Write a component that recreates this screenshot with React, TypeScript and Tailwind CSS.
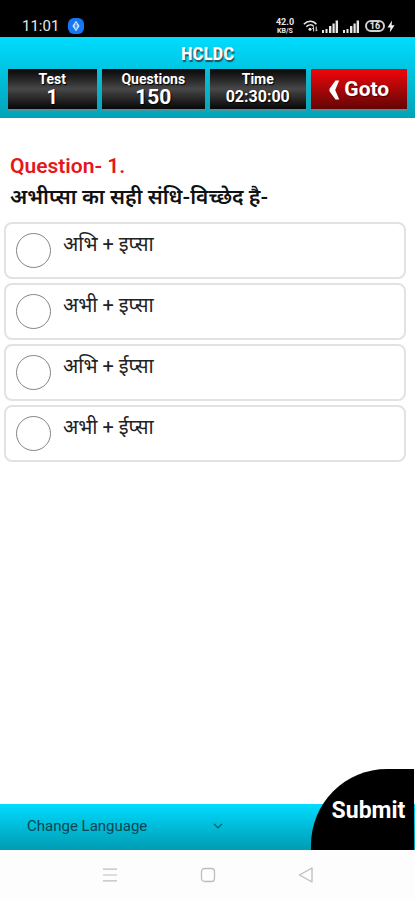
import React, { useState } from 'react';

const options = ['अभि + इप्सा', 'अभी + इप्सा', 'अभि + ईप्सा', 'अभी + ईप्सा'];

const Signal: React.FC = () => (
  <svg viewBox="0 0 16 13" className="w-4 h-[13px]" fill="#e8e8e8" aria-hidden="true">
    <rect x="0" y="10" width="2" height="3" />
    <rect x="3.5" y="9" width="2" height="4" />
    <rect x="7" y="6" width="2.4" height="7" />
    <rect x="10.5" y="3.5" width="2.2" height="9.5" />
    <rect x="13.6" y="0.5" width="2.4" height="12.5" />
  </svg>
);

const StatusBar: React.FC = () => (
  <div className="h-[37px] bg-black text-[#e8e8e8] flex items-end justify-between pl-[22px] pr-5 pb-px">
    <div className="flex items-center gap-[9px]">
      <span className="text-[15px] leading-5">11:01</span>
      <svg viewBox="0 0 16 16" className="w-4 h-4" aria-hidden="true">
        <rect width="16" height="16" rx="6" fill="#1677f2" />
        <path d="M8 2.8 11.6 8 8 13.2 4.4 8Z" fill="#cfe4ff" />
        <path d="M8 5v6M6.5 8h3" stroke="#1677f2" strokeWidth="1" />
      </svg>
    </div>
    <div className="flex items-center h-5">
      <div className="w-5 flex flex-col items-center font-bold mr-2">
        <span className="text-[9px] leading-[10px]">42.0</span>
        <span className="text-[7px] leading-2">KB/S</span>
      </div>
      <svg viewBox="0 0 15 12" className="w-[15px] h-3 mr-1" fill="none" stroke="#e8e8e8" aria-hidden="true">
        <path d="M0.8 4.2C4.6 0.2 10 0.2 13.4 4.2" strokeWidth="1.5" />
        <path d="M3.3 6.8C5.6 4.3 8.8 4.3 10.8 6.4" strokeWidth="1.5" />
        <circle cx="7" cy="9.3" r="1.5" fill="#e8e8e8" stroke="none" />
        <path d="M10.6 11.5V7.5M9.4 8.8l1.2-1.5M13.2 6.5v4.5M14.3 9.8l-1.1 1.4" strokeWidth="1" />
      </svg>
      <Signal />
      <span className="w-[5px]" />
      <Signal />
      <div className="ml-[6px] w-5 h-3 rounded-[6px] border-2 border-[#d0d0d0] text-[9px] leading-2 text-center font-bold">
        16
      </div>
      <svg viewBox="0 0 8 13" className="w-2 h-[13px] ml-[2px]" fill="#f0f0f0" aria-hidden="true">
        <path d="M5 0.5 0.5 7.5H3.4L2.8 12.5 7.6 5.2H4.6Z" />
      </svg>
    </div>
  </div>
);

const InfoTile: React.FC<{ label: string; value: string; size: string }> = ({ label, value, size }) => (
  <div className="h-10 flex flex-col items-center justify-center text-white font-bold bg-linear-to-b from-[#080808] via-[#484848] to-[#080808] shadow-[0_2px_2px_#5f8d96] [text-shadow:1px_1px_1px_#000]">
    <span className="text-[14px] leading-4">{label}</span>
    <span className={`${size} leading-5`}>{value}</span>
  </div>
);

const Header: React.FC = () => (
  <header className="bg-linear-to-b from-[#00dcff] to-[#00a3b8] px-2 pb-[9px]">
    <h1 className="h-8 pt-1 text-center text-white text-[19px] leading-[26px] font-bold font-['Liberation_Sans_Narrow','Roboto_Condensed','Liberation_Sans',sans-serif] [text-shadow:1px_2px_1px_#24505a]">
      HCLDC
    </h1>
    <div className="grid grid-cols-[89fr_104fr_96fr_97fr] gap-[5px]">
      <InfoTile label="Test" value="1" size="text-[20px]" />
      <InfoTile label="Questions" value="150" size="text-[21px]" />
      <InfoTile label="Time" value="02:30:00" size="text-[16px]" />
      <button
        type="button"
        className="h-10 flex items-center justify-center gap-1 pt-[2px] text-white text-[21px] font-bold bg-linear-to-b from-[#f3040b] to-[#650505] shadow-[0_2px_2px_#5f8d96] [text-shadow:1px_1px_1px_#500]"
      >
        <svg viewBox="0 0 12 20" className="w-3 h-5" fill="#fff" aria-hidden="true">
          <path d="M7.5 0.5h3.7L7.2 10l4 9.5H7.5L1.5 11.2V8.8Z" />
        </svg>
        Goto
      </button>
    </div>
  </header>
);

const App: React.FC = () => {
  const [selected, setSelected] = useState<number | null>(null);

  return (
    <div className="min-h-screen flex flex-col bg-white font-[Roboto,'Noto_Sans_Devanagari','Noto_Sans',sans-serif]">
      <StatusBar />
      <Header />

      <main className="flex-1 pt-[34px] pl-1 pr-[9px]">
        <h2 className="pl-[6px] text-[21px] leading-7 font-semibold text-[#e5171c]">Question- 1.</h2>
        <p id="question" className="pl-[6px] h-[42px] text-[21px] leading-[34px] font-semibold text-[#111] whitespace-nowrap">
          अभीप्सा का सही संधि-विच्छेद है-
        </p>
        <div role="radiogroup" aria-labelledby="question" className="flex flex-col gap-1">
          {options.map((option, i) => (
            <label
              key={option}
              className="h-[57px] flex items-start border-2 border-[#e2e2e2] rounded-lg pl-[10px] bg-white"
            >
              <input
                type="radio"
                name="answer"
                checked={selected === i}
                onChange={() => setSelected(i)}
                className="appearance-none shrink-0 w-[35px] h-[35px] mt-[9px] rounded-full border border-[#858585] checked:border-8"
              />
              <span className="ml-3 mt-1 text-[20px] leading-8 text-[#222]">{option}</span>
            </label>
          ))}
        </div>
      </main>

      <footer className="relative h-[46px] bg-linear-to-b from-[#00dcff] to-[#009cb2] flex items-center pl-[27px] pb-[2px]">
        <div className="relative w-[200px]">
          <select
            aria-label="Change Language"
            className="appearance-none w-full bg-transparent text-[15px] leading-6 text-[#0b4652] outline-none"
          >
            <option>Change Language</option>
            <option>हिन्दी</option>
            <option>English</option>
          </select>
          <svg viewBox="0 0 10 6" className="absolute right-1 top-[9px] w-[10px] h-[6px]" fill="none" stroke="#0b5866" aria-hidden="true">
            <path d="M1 0.8 5 5 9 0.8" strokeWidth="1.2" />
          </svg>
        </div>
        <button
          type="button"
          className="absolute right-px bottom-0 w-[103px] h-[81px] pl-3 pt-1 rounded-tl-[76px] bg-black text-white text-[23px] font-bold"
        >
          Submit
        </button>
      </footer>

      <nav className="h-[50px] bg-[#fdfdfd] grid grid-cols-[1fr_98px_98px_98px_1fr] items-center justify-items-center">
        <span />
        <button type="button" aria-label="Recent apps">
          <svg viewBox="0 0 16 14" className="w-4 h-[14px]" stroke="#bdbdbd" strokeWidth="1.2">
            <path d="M1 1.2h14M1 7h14M1 12.8h14" />
          </svg>
        </button>
        <button type="button" aria-label="Home">
          <svg viewBox="0 0 16 16" className="w-4 h-4" fill="none" stroke="#bdbdbd" strokeWidth="1.3">
            <rect x="1.5" y="1.5" width="13" height="13" rx="3" />
          </svg>
        </button>
        <button type="button" aria-label="Back">
          <svg viewBox="0 0 16 16" className="w-4 h-4" fill="none" stroke="#bdbdbd" strokeWidth="1.3" strokeLinejoin="round">
            <path d="M1.5 8 14 1v14Z" />
          </svg>
        </button>
        <span />
      </nav>
    </div>
  );
};

export default App;
